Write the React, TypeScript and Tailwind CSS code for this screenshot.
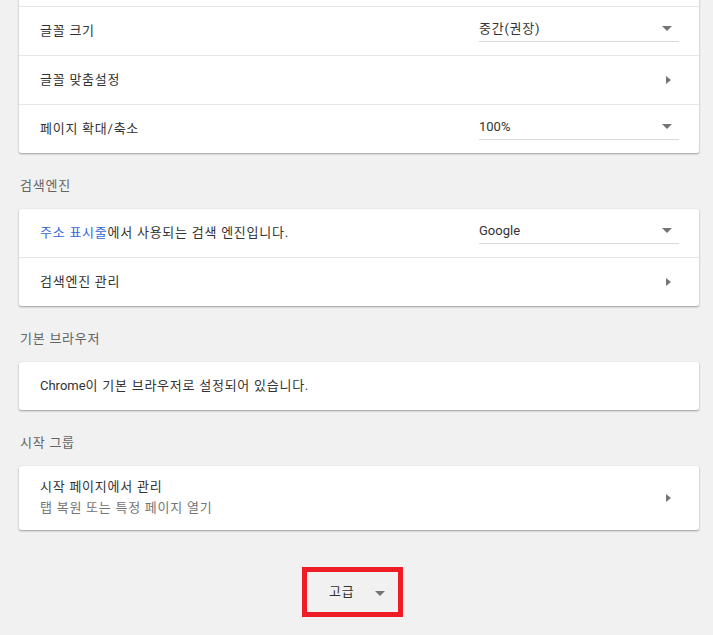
const FONT = "font-['Roboto','Noto_Sans_CJK_KR',sans-serif]";

// Korean runs in the original render are a bit wider than Noto CJK at 13px
function K({ children, className = '' }: { children: React.ReactNode; className?: string }) {
  return <span className={`tracking-[0.75px] ${className}`}>{children}</span>;
}

function DropArrow() {
  return (
    <svg width="10" height="5" viewBox="0 0 10 5" className="shrink-0">
      <path d="M0 0h10L5 5z" fill="#757575" />
    </svg>
  );
}

function SubArrow() {
  return (
    <svg width="5" height="8" viewBox="0 0 5 8" className="shrink-0">
      <path d="M0 0l5 4-5 4z" fill="#757575" />
    </svg>
  );
}

function Select({ value, korean }: { value: string; korean?: boolean }) {
  return (
    <div className="ml-auto mr-[20px] mb-[4px] flex h-[26px] w-[200px] items-center border-b border-[#dadada]">
      <span className={`flex-1 text-[13px] text-[#333] ${korean ? 'tracking-[0.75px]' : ''}`}>{value}</span>
      <span className="mr-[7px] mb-[1px]">
        <DropArrow />
      </span>
    </div>
  );
}

function Row({ children, last }: { children: React.ReactNode; last?: boolean }) {
  return (
    <div
      className={`flex items-center pl-[21px] text-[13px] text-[#333] ${
        last ? 'h-[48px]' : 'h-[49px] border-b border-[#e8e8e8]'
      }`}
    >
      {children}
    </div>
  );
}

function Card({ children, className = '' }: { children: React.ReactNode; className?: string }) {
  return (
    <div
      className={`ml-[19px] w-[680px] rounded-[2px] bg-white shadow-[0_1px_2px_rgba(0,0,0,0.35),0_0_1px_rgba(0,0,0,0.12)] ${className}`}
    >
      {children}
    </div>
  );
}

function Heading({ text }: { text: string }) {
  return (
    <div className="h-[56px] pl-[20px] pt-[25px] text-[13px] leading-[16px] text-[#646464]">
      <K>{text}</K>
    </div>
  );
}

export default function App() {
  return (
    <div className={`min-h-[635px] w-[713px] overflow-hidden bg-[#f1f1f1] ${FONT}`}>
      <Card className="-mt-[42px]">
        <Row>
          <span />
        </Row>
        <Row>
          <K>글꼴 크기</K>
          <Select value="중간(권장)" korean />
        </Row>
        <Row>
          <K>글꼴 맞춤설정</K>
          <span className="ml-auto mr-[28px]">
            <SubArrow />
          </span>
        </Row>
        <Row last>
          <K>페이지 확대/축소</K>
          <Select value="100%" />
        </Row>
      </Card>

      <Heading text="검색엔진" />
      <Card>
        <Row>
          <K>
            <span className="text-[#3367d6]">주소 표시줄</span>에서 사용되는 검색 엔진입니다.
          </K>
          <Select value="Google" />
        </Row>
        <Row last>
          <K>검색엔진 관리</K>
          <span className="ml-auto mr-[28px]">
            <SubArrow />
          </span>
        </Row>
      </Card>

      <Heading text="기본 브라우저" />
      <Card>
        <Row last>
          <span>
            Chrome<K>이 기본 브라우저로 설정되어 있습니다.</K>
          </span>
        </Row>
      </Card>

      <Heading text="시작 그룹" />
      <Card>
        <div className="flex h-[64px] items-center pl-[21px]">
          <div className="flex flex-col pb-[2px] text-[13px] leading-[21px]">
            <K className="text-[#333]">시작 페이지에서 관리</K>
            <K className="text-[#757575]">탭 복원 또는 특정 페이지 열기</K>
          </div>
          <span className="ml-auto mr-[28px]">
            <SubArrow />
          </span>
        </div>
      </Card>

      <div className="flex justify-center pt-[37px]">
        <div className="ml-[-8px] flex h-[50px] w-[101px] items-center border-[5px] border-[#ee1c25] pl-[22px]">
          <K className="text-[13px] text-[#333]">고급</K>
          <span className="ml-[21px] mt-[3px]">
            <DropArrow />
          </span>
        </div>
      </div>
    </div>
  );
}
